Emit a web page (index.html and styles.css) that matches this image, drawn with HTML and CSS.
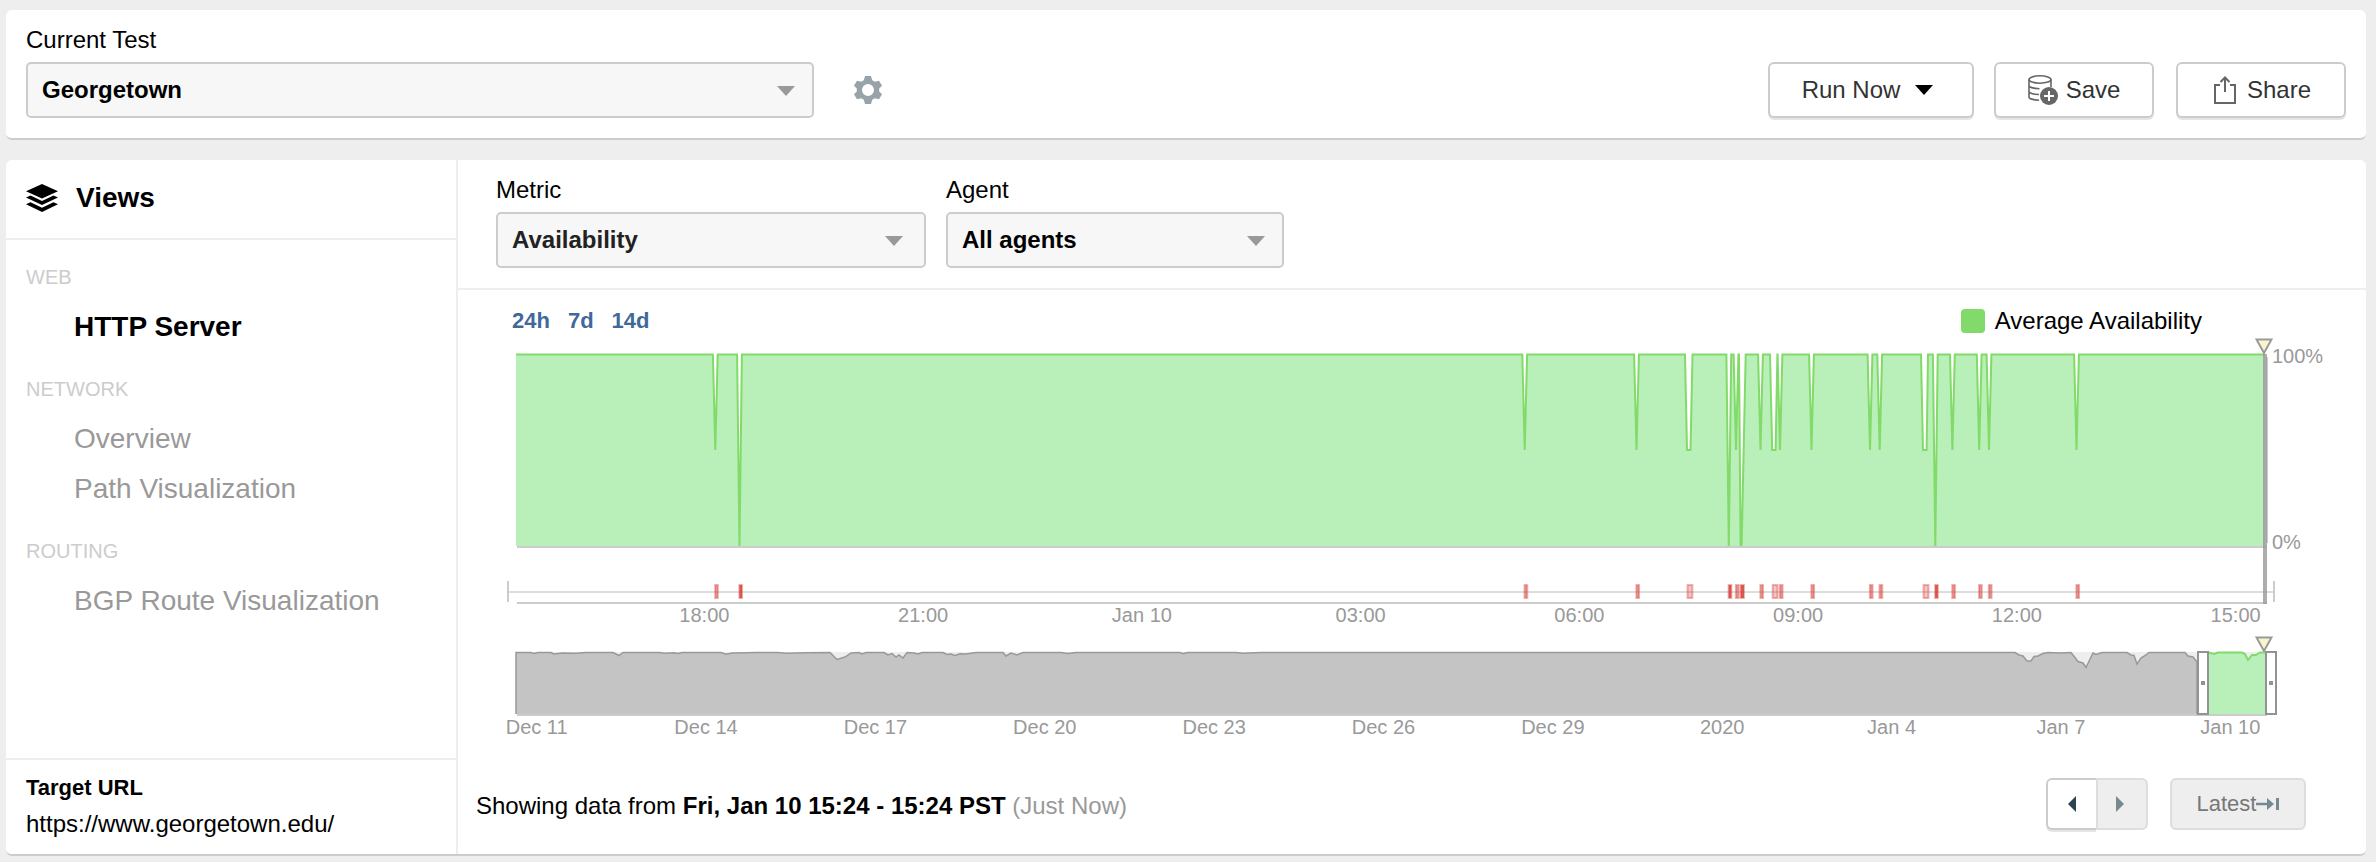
FILE: index.html
```html
<!DOCTYPE html>
<html lang="en">
<head>
<meta charset="utf-8">
<title>Views - HTTP Server</title>
<link rel="stylesheet" href="styles.css">
</head>
<body>
<header class="panel test-bar">
  <div class="field field-test">
    <label for="test">Current Test</label>
    <div class="select"><select id="test"><option>Georgetown</option></select></div>
  </div>
  <button class="icon-button" type="button" aria-label="Test settings">
    <svg width="28" height="28" viewBox="0 0 28 28" aria-hidden="true"><path fill="#98a3a9" fill-rule="evenodd" d="M11 0h6l1.200 4.200 2.600 1.600L25 4.800l3 5-2.800 2.600v3.200L28 18.200l-3 5-4.200-1-2.600 1.600L17 28h-6l-1.200-4.200-2.600-1.600L3 23.200l-3-5 2.800-2.600v-3.200L0 9.800l3-5 4.200 1 2.600-1.600zM14 8a6 6 0 1 0 0 12a6 6 0 1 0 0-12z"/></svg>
  </button>
  <div class="actions">
    <button class="button button-run" type="button">Run Now <span class="caret"></span></button>
    <button class="button button-save" type="button">
      <svg width="30" height="30" viewBox="0 0 30 30" aria-hidden="true">
        <g fill="none" stroke="#666" stroke-width="1.600"><ellipse cx="12" cy="4.500" rx="11" ry="3.700"/><path d="M1 4.500V22c0 1.500 4 3 10 3.300M23 4.500V12M1 10.500c0 1.500 4 3 10.500 3.200M1 16.300c0 1.500 4 3 10 3.200"/></g>
        <circle cx="21" cy="21" r="9" fill="#666"/><path d="M21 16v10M16 21h10" stroke="#fff" stroke-width="2"/>
      </svg>Save</button>
    <button class="button button-share" type="button">
      <svg width="22" height="28" viewBox="0 0 22 28" fill="none" stroke="#666" stroke-width="2" aria-hidden="true"><path d="M6 9H1v18h20V9h-5M11 16V2M6.500 6L11 1.500 15.500 6"/></svg>Share</button>
  </div>
</header>

<div class="panel workspace">
  <aside class="sidebar">
    <h2 class="sidebar-title">
      <svg width="32" height="28" viewBox="0 0 32 28" aria-hidden="true"><path d="M16 0l16 7.200-16 7.200L0 7.200z"/><path d="M0 13.500l4.500-2L16 17l11.500-5.500 4.500 2L16 21z"/><path d="M0 20.200l4.500-2L16 23.700l11.500-5.500 4.500 2L16 28z"/></svg>
      Views
    </h2>
    <nav class="nav">
      <h3>Web</h3>
      <ul><li><a class="current" href="#http" aria-current="page">HTTP Server</a></li></ul>
      <h3>Network</h3>
      <ul><li><a href="#overview">Overview</a></li><li><a href="#path">Path Visualization</a></li></ul>
      <h3>Routing</h3>
      <ul><li><a href="#bgp">BGP Route Visualization</a></li></ul>
    </nav>
    <div class="target"><strong>Target URL</strong><span>https://www.georgetown.edu/</span></div>
  </aside>

  <main class="main">
    <div class="filters">
      <div class="field field-metric">
        <label for="metric">Metric</label>
        <div class="select soft"><select id="metric"><option>Availability</option></select></div>
      </div>
      <div class="field field-agent">
        <label for="agent">Agent</label>
        <div class="select"><select id="agent"><option>All agents</option></select></div>
      </div>
    </div>

    <div class="chart-head">
      <div class="ranges"><a href="#24h">24h</a><a href="#7d">7d</a><a href="#14d">14d</a></div>
      <div class="legend"><span class="swatch"></span>Average Availability</div>
    </div>

    <div class="plot-row">
      <div class="plot">
        <svg class="timeline" viewBox="0 0 1749 250" preserveAspectRatio="none" role="img" aria-label="Average availability over the last 24 hours">
          <path id="area" fill="#b9efb8"/>
          <path id="line" class="line"/>
          <path d="M1 193H1751M1 249H1751" stroke="#ccc" stroke-width="2"/>
          <path d="M-8 238H1758" stroke="#ddd" stroke-width="2"/>
          <path d="M-8 227v21M1758 227v21" stroke="#ccc" stroke-width="2"/>
          <path d="M1751 3v186" stroke="#ccc" stroke-width="2"/>
          <g id="events" class="events"></g>
        </svg>
        <span class="cursor"></span>
        <svg class="marker" width="18" height="16" viewBox="0 0 18 16" aria-hidden="true"><path d="M1.500 1.500h15L9 15z" fill="#f9f6cd" stroke="#999" stroke-width="2"/></svg>
      </div>
      <div class="scale"><span>100%</span><span>0%</span></div>
    </div>
    <div class="ticks ticks-hours"><span>18:00</span><span>21:00</span><span>Jan 10</span><span>03:00</span><span>06:00</span><span>09:00</span><span>12:00</span><span>15:00</span></div>

    <div class="plot-row plot-row-mini">
      <div class="plot">
        <svg class="overview" viewBox="0 0 1749 64" preserveAspectRatio="none" role="img" aria-label="Availability over the last 30 days">
          <path d="M0 0H1749V62H0z" fill="#eee"/>
          <path id="mini-grey" fill="#c4c4c4" stroke="#999" stroke-width="1.500"/>
          <path d="M1 63H1751" stroke="#ccc" stroke-width="2"/>
          <path id="mini-green" fill="#b9efb8"/>
          <path id="mini-green-line" class="line"/>
        </svg>
        <span class="handle handle-start"></span>
        <span class="handle handle-end"></span>
        <svg class="marker marker-mini" width="18" height="16" viewBox="0 0 18 16" aria-hidden="true"><path d="M1.500 1.500h15L9 15z" fill="#f9f6cd" stroke="#999" stroke-width="2"/></svg>
      </div>
    </div>
    <div class="ticks ticks-days"><span>Dec 11</span><span>Dec 14</span><span>Dec 17</span><span>Dec 20</span><span>Dec 23</span><span>Dec 26</span><span>Dec 29</span><span>2020</span><span>Jan 4</span><span>Jan 7</span><span>Jan 10</span></div>

    <div class="status">
      <p>Showing data from <strong>Fri, Jan 10 15:24 - 15:24 PST</strong> <span>(Just Now)</span></p>
      <div class="pager">
        <button class="step" type="button" aria-label="Previous"><svg width="8" height="16" viewBox="0 0 8 16" aria-hidden="true"><path d="M8 0v16L0 8z" fill="#2d4552"/></svg></button>
        <button class="step" type="button" aria-label="Next" disabled><svg width="8" height="16" viewBox="0 0 8 16" aria-hidden="true"><path d="M0 0v16l8-8z" fill="#778990"/></svg></button>
      </div>
      <button class="latest" type="button" disabled>Latest<svg width="23" height="12" viewBox="0 0 23 12" aria-hidden="true"><path d="M0 4.800h11V0l7 6-7 6V7.200H0zM20 0h3v12h-3z" fill="#778990"/></svg></button>
    </div>
  </main>
</div>
<script src="chart.js"></script>
</body>
</html>
```
FILE: styles.css
```css
* { box-sizing: border-box; }
body {
  margin: 0;
  padding: 10px 10px 6px 6px;
  background: #eee;
  color: #000;
  font: 24px/28px "Liberation Sans", Arial, sans-serif;
}
h2, h3, p, ul { margin: 0; padding: 0; }
ul { list-style: none; }
a { text-decoration: none; }
button, select { font: inherit; margin: 0; }
svg { display: block; flex: none; }

.panel {
  background: #fff;
  border-bottom: 2px solid #ccc;
  border-radius: 6px;
}

/* Top bar */
.test-bar {
  display: flex;
  align-items: flex-end;
  padding: 16px 20px 20px;
  margin-bottom: 20px;
}
.field { display: flex; flex-direction: column; gap: 8px; }
.field-test { flex: 0 1 788px; }
.field-metric { flex: 0 1 430px; }
.field-agent { flex: 0 1 338px; }
.select { position: relative; }
.select select {
  display: block;
  width: 100%;
  height: 56px;
  padding: 0 40px 0 14px;
  appearance: none;
  background: #f7f7f7;
  border: 2px solid #ccc;
  border-radius: 5px;
  color: #000;
  font-weight: bold;
}
.select.soft select { color: #222; }
.select::after {
  content: "";
  position: absolute;
  top: 24px;
  right: 19px;
  border: solid transparent;
  border-width: 10px 9px 0;
  border-top-color: #999;
  pointer-events: none;
}
.select.soft::after { right: 23px; }
.icon-button {
  display: flex;
  align-items: center;
  height: 56px;
  margin-left: 40px;
  padding: 0;
  border: 0;
  background: none;
}
.actions { display: flex; margin-left: auto; }
.button {
  display: flex;
  align-items: center;
  justify-content: center;
  height: 56px;
  padding: 0;
  background: #fff;
  border: 2px solid #ccc;
  border-radius: 6px;
  box-shadow: 0 2px 0 #e5e5e5;
  color: #333;
}
.button-run { width: 206px; gap: 15px; padding-right: 7px; }
.button-save { width: 160px; gap: 8px; margin-left: 20px; }
.button-share { width: 170px; gap: 11px; margin-left: 22px; padding-left: 3px; }
.caret {
  border: solid transparent;
  border-width: 10px 9px 0;
  border-top-color: #000;
}

/* Workspace */
.workspace { display: flex; }
.sidebar {
  display: flex;
  flex-direction: column;
  flex: 0 0 452px;
  border-right: 2px solid #eee;
}
.sidebar-title {
  display: flex;
  align-items: center;
  gap: 18px;
  height: 80px;
  padding: 0 20px 2px;
  border-bottom: 2px solid #eee;
  font-size: 28px;
}
.nav { flex: 1; padding-bottom: 26px; }
.nav h3 {
  padding: 25px 20px 13px;
  color: #ccc;
  font-size: 20px;
  font-weight: normal;
  line-height: 24px;
  text-transform: uppercase;
}
.nav a {
  display: block;
  padding-left: 68px;
  color: #999;
  font-size: 28px;
  line-height: 50px;
}
.nav a.current { color: #000; font-weight: bold; }
.target {
  display: flex;
  flex-direction: column;
  gap: 8px;
  padding: 14px 20px 16px;
  border-top: 2px solid #eee;
}
.target strong { font-size: 22px; }

.main { flex: 1; min-width: 0; }
.filters {
  display: flex;
  gap: 20px;
  padding: 16px 38px 20px;
  border-bottom: 2px solid #eee;
}
.chart-head {
  display: flex;
  justify-content: space-between;
  padding: 17px 164px 19px 54px;
}
.ranges { display: flex; gap: 18px; font-size: 22px; font-weight: bold; }
.ranges a { color: #41689a; }
.legend { display: flex; align-items: center; gap: 10px; }
.swatch { width: 24px; height: 24px; border-radius: 4px; background: #82da6a; }

/* Charts */
.plot-row { display: flex; padding-left: 58px; padding-right: 101px; position: relative; }
.plot-row-mini { margin-top: 26px; }
.plot { position: relative; flex: 1; min-width: 0; }
.timeline, .overview { width: 100%; overflow: visible; }
.timeline { height: 250px; }
.overview { height: 64px; }
.line { fill: none; stroke: #82da6a; stroke-width: 2px; }
.events rect { fill: #d8403a; fill-opacity: .5; stroke: #d8403a; stroke-opacity: .4; stroke-width: 2px; }
.events .wide { fill-opacity: .3; }
.events .full { fill-opacity: .85; }
.cursor {
  position: absolute;
  top: 0;
  right: -2px;
  width: 4px;
  height: 250px;
  background: #999;
  opacity: .8;
}
.marker { position: absolute; top: -16px; right: -8px; }
.scale {
  position: absolute;
  top: -8px;
  right: 0;
  width: 94px;
  height: 206px;
  display: flex;
  flex-direction: column;
  justify-content: space-between;
  color: #999;
  font-size: 20px;
  line-height: 20px;
}
.ticks {
  display: grid;
  grid-auto-flow: column;
  grid-auto-columns: 1fr;
  color: #999;
  font-size: 20px;
  line-height: 22px;
  text-align: center;
}
.ticks-hours { padding: 0 21px 0 137px; }
.ticks-days { margin-left: -6px; padding-right: 51px; }
.handle {
  position: absolute;
  top: -1px;
  width: 12px;
  height: 64px;
  background: #fff;
  border: 2px solid #939393;
  display: flex;
  align-items: center;
  justify-content: center;
}
.handle::after { content: ""; width: 4px; height: 4px; background: #939393; }
.handle-start { left: 96.100%; }
.handle-end { left: 100%; }

/* Status row */
.status { display: flex; align-items: center; padding: 40px 60px 24px 18px; }
.status p { flex: 1; padding-top: 4px; }
.status p span { color: #999; }
.pager { display: flex; margin-right: 22px; }
.step {
  display: flex;
  align-items: center;
  justify-content: center;
  width: 50px;
  height: 52px;
  padding: 0;
  background: #fff;
  border: 2px solid #ccc;
  border-right: 0;
  border-radius: 6px 0 0 6px;
  box-shadow: 0 2px 0 #e5e5e5;
}
.step:disabled {
  width: 52px;
  padding-right: 4px;
  background: #eee;
  border: 2px solid #ddd;
  border-radius: 0 6px 6px 0;
  box-shadow: none;
}
.latest {
  display: flex;
  align-items: center;
  justify-content: center;
  width: 136px;
  height: 52px;
  padding: 0;
  background: #eee;
  border: 2px solid #ddd;
  border-radius: 6px;
  color: #777;
  font-size: 22px;
}
```
FILE: chart.js
```js
// Each outage: [top left, bottom left, bottom right, top right, depth]
const H = 96, F = 192;
const dip = (x, d) => [x - 2.4, x, x, x + 2.4, d];
const outages = [
  dip(199.3, H), dip(223.5, F), dip(1008.7, H), dip(1120.5, H),
  [1169, 1171, 1174.5, 1176.5, H],
  dip(1212.8, F), dip(1220, H),
  [1223, 1224.6, 1225.6, 1229.7, F],
  dip(1244.5, H),
  [1254, 1256.2, 1259.6, 1261.4, H],
  dip(1264, H), dip(1295.5, H), dip(1354, H), dip(1363.7, H),
  [1405, 1407, 1410.6, 1412, H],
  dip(1419.3, F), dip(1436.4, H), dip(1463.2, H), dip(1473, H), dip(1560.5, H)
];

const series = outages.map(([a, b, c, d, y]) =>
  `L${a} .5L${b} ${y}L${c} ${y}L${d} .5`).join("");
const line = `M0 .5${series}L1749 .5`;
document.getElementById("line").setAttribute("d", line);
document.getElementById("area").setAttribute("d", `${line}V192H0Z`);

document.getElementById("events").innerHTML = outages.map(([, b, c, , y]) => {
  const w = 2.7 + (c - b) * 0.6;
  const kind = y === F ? "full" : c > b ? "wide" : "";
  return `<rect class="${kind}" x="${(b + c) / 2 + 1.2 - w / 2}" y="231" width="${w}" height="13"/>`;
}).join("");

const grey = "0,.5 15,.5 18,1.5 22,.5 35,.5 38,2 42,1.5 46,1 60,1.3 70,.5 97,.5 103,3.5 107,.5 144,.5 148,1.3 158,.8 162,1.5 166,.5 205,.5 210,2.2 216,1 230,.8 240,.5 262,.5 270,1.3 290,.8 314,.5 321,7.5 329,5 335,1 343,.5 346,2 350,.5 368,.5 372,3 376,1.5 380,5 383,3 387,6 391,.5 398,1 402,2 406,.5 427,.5 431,2.5 435,2 439,3.5 444,1.8 450,2 460,.5 487,.5 490,4 495,1 501,3 507,.5 545,.5 552,1.6 560,.5 664,.5 667,1.6 672,.5 720,.5 727,1.2 745,.5 1499,.5 1503,3 1507,4 1511,9 1515,9 1518,4.5 1522,4 1527,1.5 1532,.5 1544,1 1555,.5 1562,9.5 1567,11 1570,15.5 1577,1 1580,2.5 1586,.5 1611,.5 1615,3 1618,3.5 1621,12 1625,6 1630,3 1633,.5 1669,.5 1672,4 1677,5 1681,10";
const green = "1693,.5 1698,2 1702,.5 1726,.5 1729,2 1732,8 1736,3 1740,3 1744,.5 1749,.5";
document.getElementById("mini-grey").setAttribute("d", `M0,62L${grey}V62`);
document.getElementById("mini-green").setAttribute("d", `M1693,62L${green}V62Z`);
document.getElementById("mini-green-line").setAttribute("d", `M${green}`);
```
